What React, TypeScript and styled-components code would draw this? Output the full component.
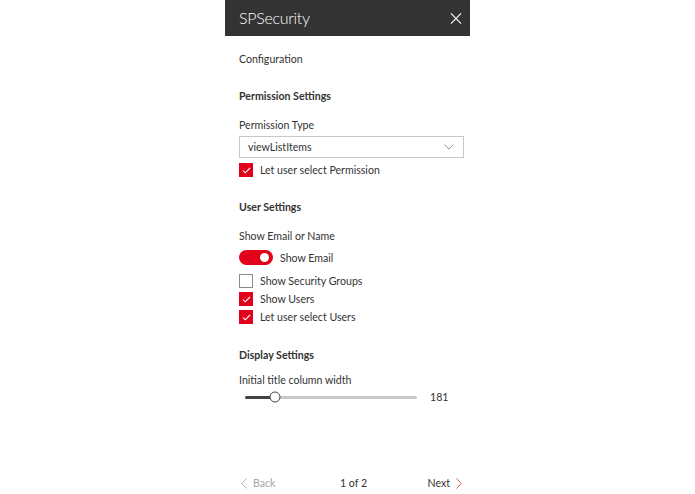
import styled, { createGlobalStyle } from "styled-components";

const red = "#e3001b";
const text = "#333333";

const GlobalStyle = createGlobalStyle`
  html, body {
    margin: 0;
    padding: 0;
    background: #ffffff;
    font-family: Lato, "Open Sans", sans-serif;
    color: ${text};
  }
`;

function Check() {
  return (
    <svg width="9" height="7" viewBox="0 0 9 7">
      <path d="M1 3.6 L3.3 5.8 L8 1" fill="none" stroke="#fff" strokeWidth="1.1" />
    </svg>
  );
}

function Checkbox({ checked, label }: { checked: boolean; label: string }) {
  return (
    <CheckRow>
      <Box $checked={checked}>{checked && <Check />}</Box>
      <span>{label}</span>
    </CheckRow>
  );
}

function App() {
  const percent = ((181 - 150) / (350 - 150)) * 100 + 2;

  return (
    <>
      <GlobalStyle />
      <Page>
        <Panel>
          <Header>
            <Title>SPSecurity</Title>
            <Close>
              <svg width="13" height="13" viewBox="0 0 13 13">
                <path d="M1 1 L12 12 M12 1 L1 12" stroke="#fff" strokeWidth="1.2" />
              </svg>
            </Close>
          </Header>
          <Body>
            <Line $top={15}>Configuration</Line>
            <Heading $top={21}>Permission Settings</Heading>
            <Line $top={13}>Permission Type</Line>
            <Dropdown>
              <span>viewListItems</span>
              <svg width="10" height="6" viewBox="0 0 10 6">
                <path d="M0.5 0.5 L5 5 L9.5 0.5" fill="none" stroke="#8a8a8a" strokeWidth="0.9" />
              </svg>
            </Dropdown>
            <Group $top={5}>
              <Checkbox checked label="Let user select Permission" />
            </Group>

            <Heading $top={22}>User Settings</Heading>
            <Line $top={13}>Show Email or Name</Line>
            <ToggleRow>
              <Toggle>
                <Knob />
              </Toggle>
              <span>Show Email</span>
            </ToggleRow>
            <Group $top={9}>
              <Checkbox checked={false} label="Show Security Groups" />
              <Checkbox checked label="Show Users" />
              <Checkbox checked label="Let user select Users" />
            </Group>

            <Heading $top={23}>Display Settings</Heading>
            <Line $top={9}>Initial title column width</Line>
            <SliderRow>
              <Track>
                <Filled style={{ width: `${percent}%` }} />
                <Thumb style={{ left: `${percent}%` }} />
              </Track>
              <Value>181</Value>
            </SliderRow>
          </Body>
          <Footer>
            <NavButton $disabled>
              <svg width="6" height="11" viewBox="0 0 6 11">
                <path d="M5.5 0.5 L0.7 5.5 L5.5 10.5" fill="none" stroke="#b3b3b3" strokeWidth="1" />
              </svg>
              Back
            </NavButton>
            <PageCount>1 of 2</PageCount>
            <NavButton>
              Next
              <svg width="6" height="11" viewBox="0 0 6 11">
                <path d="M0.5 0.5 L5.3 5.5 L0.5 10.5" fill="none" stroke="#e8536a" strokeWidth="1" />
              </svg>
            </NavButton>
          </Footer>
        </Panel>
      </Page>
    </>
  );
}

export default App;

const Page = styled.div`
  display: flex;
  justify-content: center;
  min-height: 100vh;
`;

const Panel = styled.div`
  width: 245px;
  display: flex;
  flex-direction: column;
  min-height: 100vh;
  font-size: 10.6px;
  line-height: 16px;
`;

const Header = styled.div`
  height: 36px;
  background: #333333;
  display: flex;
  align-items: center;
  justify-content: space-between;
  padding: 0 7px 0 14px;
`;

const Title = styled.div`
  color: #ffffff;
  font-size: 16px;
  font-weight: 300;
  letter-spacing: -0.3px;
  line-height: 20px;
`;

const Close = styled.div`
  width: 12px;
  height: 12px;
  display: flex;
  align-items: center;
  justify-content: center;
  margin-right: 1px;
`;

const Body = styled.div`
  padding: 0 6px 0 14px;
  display: flex;
  flex-direction: column;
`;

const Line = styled.div<{ $top: number }>`
  margin-top: ${(p) => p.$top}px;
  color: ${text};
`;

const Heading = styled(Line)`
  font-weight: 700;
`;

const Dropdown = styled.div`
  margin-top: 3px;
  height: 22px;
  box-sizing: border-box;
  border: 1px solid #c8c8c8;
  display: flex;
  align-items: center;
  justify-content: space-between;
  padding: 0 9px 0 8px;
`;

const Group = styled.div<{ $top: number }>`
  margin-top: ${(p) => p.$top}px;
  display: flex;
  flex-direction: column;
  gap: 4px;
`;

const CheckRow = styled.div`
  display: flex;
  align-items: center;
  gap: 7px;
  height: 14px;
`;

const Box = styled.div<{ $checked: boolean }>`
  width: 14px;
  height: 14px;
  box-sizing: border-box;
  display: flex;
  align-items: center;
  justify-content: center;
  background: ${(p) => (p.$checked ? red : "#fff")};
  border: 1px solid ${(p) => (p.$checked ? red : "#8a8a8a")};
`;

const ToggleRow = styled.div`
  margin-top: 6px;
  display: flex;
  align-items: center;
  gap: 7px;
  height: 15px;
`;

const Toggle = styled.div`
  width: 34px;
  height: 15px;
  border-radius: 8px;
  background: ${red};
  display: flex;
  align-items: center;
  justify-content: flex-end;
  padding-right: 4px;
  box-sizing: border-box;
`;

const Knob = styled.div`
  width: 9px;
  height: 9px;
  border-radius: 50%;
  background: #ffffff;
`;

const SliderRow = styled.div`
  margin-top: 3px;
  height: 12px;
  display: flex;
  align-items: center;
  padding-left: 6px;
`;

const Track = styled.div`
  position: relative;
  width: 172px;
  height: 3px;
  border-radius: 2px;
  background: #c8c8c8;
`;

const Filled = styled.div`
  position: absolute;
  left: 0;
  top: 0;
  height: 3px;
  border-radius: 2px;
  background: #444444;
`;

const Thumb = styled.div`
  position: absolute;
  top: 50%;
  width: 11px;
  height: 11px;
  box-sizing: border-box;
  border: 1.5px solid #444444;
  border-radius: 50%;
  background: #ffffff;
  transform: translate(-50%, -50%);
`;

const Value = styled.div`
  margin-left: 13px;
`;

const Footer = styled.div`
  margin-top: auto;
  height: 16px;
  margin-bottom: 3px;
  padding: 0 8px 0 16px;
  display: flex;
  align-items: center;
  justify-content: space-between;
`;

const NavButton = styled.div<{ $disabled?: boolean }>`
  display: flex;
  align-items: center;
  gap: 6px;
  color: ${(p) => (p.$disabled ? "#a6a6a6" : text)};
`;

const PageCount = styled.div`
  margin-left: 4px;
`;
